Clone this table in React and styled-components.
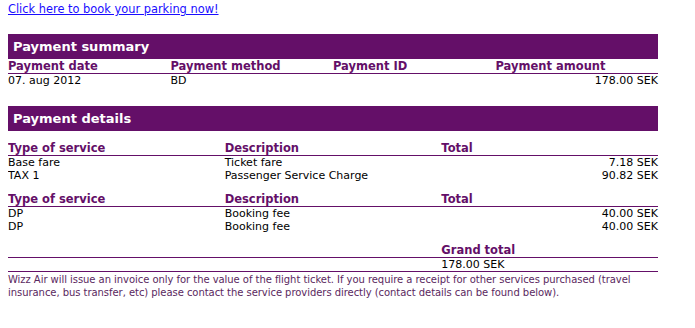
import React from 'react';
import styled, { createGlobalStyle } from 'styled-components';

const purple = '#640f68';

const GlobalStyle = createGlobalStyle`
  body {
    margin: 0 8px;
    background: #fff;
    font-family: "DejaVu Sans", Verdana, sans-serif;
    font-size: 11px;
    color: #000;
  }
`;

const Page = styled.div`
  width: 650px;
`;

const LinkLine = styled.div`
  height: 34px;
  padding-top: 1px;
  box-sizing: border-box;
  line-height: 16px;
  font-size: 11.4px;

  a {
    color: #1a0dff;
  }
`;

const Bar = styled.div`
  height: 25px;
  line-height: 25px;
  background: ${purple};
  color: #fff;
  font-weight: bold;
  font-size: 13px;
  padding-left: 5px;
`;

const Grid = styled.div`
  display: grid;
  grid-template-columns: repeat(${p => p.cols}, 1fr);
  margin-top: ${p => p.gap || 0}px;
`;

const Row = styled.div`
  display: contents;
`;

const HeadCell = styled.div`
  color: ${purple};
  font-weight: bold;
  font-size: 11.5px;
  line-height: 14px;
  border-bottom: 1px solid ${purple};
`;

const Cell = styled.div`
  line-height: 13px;
  text-align: ${p => (p.right ? 'right' : 'left')};
  border-bottom: ${p => (p.ruled ? `1px solid ${purple}` : 'none')};
`;

const Note = styled.p`
  margin: 1px 0 0;
  color: #5a2860;
  font-size: 10px;
  line-height: 13px;
  letter-spacing: -0.05px;
`;

const summaryHead = ['Payment date', 'Payment method', 'Payment ID', 'Payment amount'];
const detailHead = ['Type of service', 'Description', 'Total'];

const detailGroups = [
  [
    ['Base fare', 'Ticket fare', '7.18 SEK'],
    ['TAX 1', 'Passenger Service Charge', '90.82 SEK'],
  ],
  [
    ['DP', 'Booking fee', '40.00 SEK'],
    ['DP', 'Booking fee', '40.00 SEK'],
  ],
];

const DetailTable = ({ rows }) => (
  <Grid cols={3} gap={10}>
    <Row>
      {detailHead.map(h => (
        <HeadCell key={h}>{h}</HeadCell>
      ))}
    </Row>
    {rows.map((r, i) => (
      <Row key={i}>
        <Cell>{r[0]}</Cell>
        <Cell>{r[1]}</Cell>
        <Cell right>{r[2]}</Cell>
      </Row>
    ))}
  </Grid>
);

export default function App() {
  return (
    <Page>
      <GlobalStyle />
      <LinkLine>
        <a href="#parking">Click here to book your parking now!</a>
      </LinkLine>

      <Bar>Payment summary</Bar>
      <Grid cols={4}>
        <Row>
          {summaryHead.map(h => (
            <HeadCell key={h}>{h}</HeadCell>
          ))}
        </Row>
        <Row>
          <Cell>07. aug 2012</Cell>
          <Cell>BD</Cell>
          <Cell />
          <Cell right>178.00 SEK</Cell>
        </Row>
      </Grid>

      <Grid cols={1} gap={19}>
        <Bar>Payment details</Bar>
      </Grid>
      {detailGroups.map((rows, i) => (
        <DetailTable key={i} rows={rows} />
      ))}

      <Grid cols={3} gap={10}>
        <Row>
          <HeadCell />
          <HeadCell />
          <HeadCell>Grand total</HeadCell>
        </Row>
        <Row>
          <Cell ruled />
          <Cell ruled />
          <Cell ruled>178.00 SEK</Cell>
        </Row>
      </Grid>

      <Note>
        Wizz Air will issue an invoice only for the value of the flight ticket. If you require a
        receipt for other services purchased (travel insurance, bus transfer, etc) please contact
        the service providers directly (contact details can be found below).
      </Note>
    </Page>
  );
}
